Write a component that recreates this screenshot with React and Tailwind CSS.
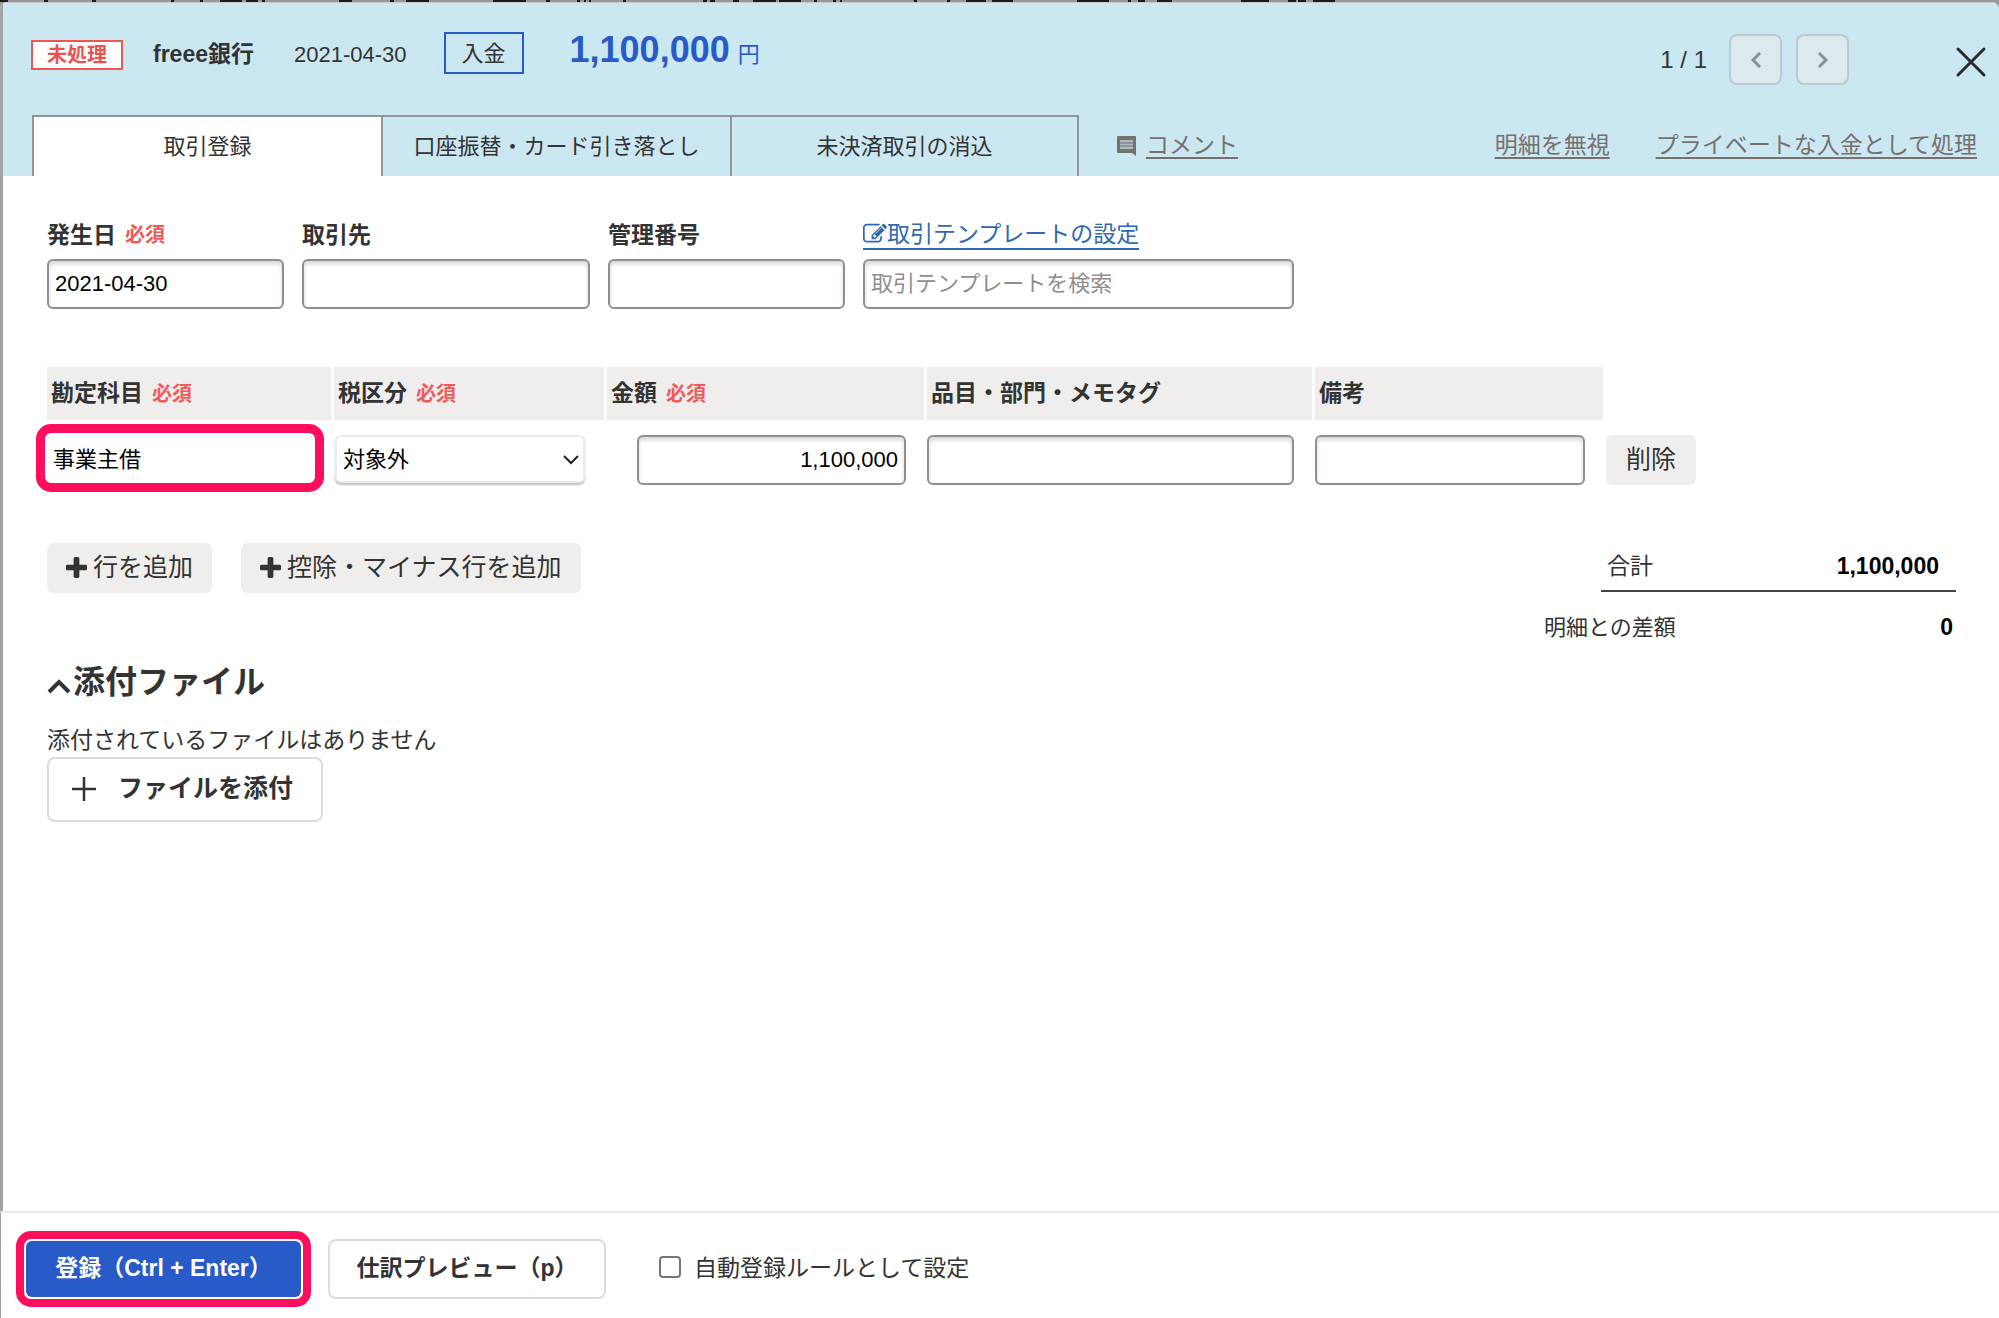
import { useState } from "react";

const FIELD =
  "h-[50px] rounded-md border-2 border-[#8f8f8f] bg-white px-[6px] text-[22px] text-black shadow-[inset_0_3px_4px_rgba(0,0,0,0.16)] outline-none placeholder:text-[#8e8e8e]";
const SOFT_BUTTON =
  "flex h-[50px] items-center rounded-md bg-[#efeeed] pb-[2px] text-[25px] leading-[36px]";
const HEAD = "flex h-[53px] items-center gap-[9px] bg-[#efeeed] pl-1 text-[23px] font-bold";

/* Bottom edge of the menu bar behind the dialog: [x, width] of each glyph foot. */
const MENU_FEET = [
  [0, 8], [44, 4], [92, 4], [171, 3], [200, 3], [220, 22], [246, 12], [262, 3], [339, 13],
  [390, 4], [406, 23], [493, 33], [546, 4], [577, 3], [584, 2], [589, 2], [623, 3], [703, 4],
  [710, 5], [733, 6], [753, 23], [779, 22], [814, 3], [833, 3], [840, 2], [914, 3], [947, 3],
  [966, 20], [992, 21], [1077, 32], [1128, 3], [1138, 7], [1157, 15], [1241, 28], [1288, 8],
  [1298, 8], [1313, 22],
];

function PlusIcon() {
  return (
    <svg className="size-[21px] shrink-0" viewBox="192 128 1408 1408" fill="#333">
      <path d="M1600 736v192q0 40-28 68t-68 28h-416v416q0 40-28 68t-68 28h-192q-40 0-68-28t-28-68v-416h-416q-40 0-68-28t-28-68v-192q0-40 28-68t68-28h416v-416q0-40 28-68t68-28h192q40 0 68 28t28 68v416h416q40 0 68 28t28 68z" />
    </svg>
  );
}

function EditIcon() {
  return (
    <svg className="size-[24px] shrink-0" viewBox="0 0 1792 1792" fill="currentColor">
      <path d="M888 1184l116-116-152-152-116 116v56h96v96h56zm440-720q-16-16-33 1l-350 350q-17 17-1 33t33-1l350-350q17-17 1-33zm80 594v190q0 119-84.5 203.500t-203.500 84.500h-832q-119 0-203.500-84.500t-84.500-203.500v-832q0-119 84.500-203.500t203.500-84.500h832q63 0 117 25 15 7 18 23 3 17-9 29l-49 49q-14 14-32 8-23-6-45-6h-832q-66 0-113 47t-47 113v832q0 66 47 113t113 47h832q66 0 113-47t47-113v-126q0-13 9-22l64-64q15-15 35-7t20 29zm-96-738l288 288-672 672h-288v-288zm444 132l-92 92-288-288 92-92q28-28 68-28t68 28l152 152q28 28 28 68t-28 68z" />
    </svg>
  );
}

function Required() {
  return <span className="text-[20px] font-bold text-[#f05a5a]">必須</span>;
}

function Field({ label, id, required, width, value }) {
  return (
    <div className={`flex flex-col gap-[7px] ${width}`}>
      <label htmlFor={id} className="flex items-center gap-[9px] text-[23px] leading-[34px] font-bold">
        {label}
        {required && <Required />}
      </label>
      <input id={id} defaultValue={value} className={`${FIELD} w-full`} />
    </div>
  );
}

function NavButton({ label, d }) {
  return (
    <button
      aria-label={label}
      className="flex h-[51px] w-[53px] items-center justify-center rounded-lg border-2 border-[#bccbd1] bg-[#dce9ef]"
    >
      <svg width="12" height="16" viewBox="0 0 12 16" fill="none" stroke="#84919a" strokeWidth="3">
        <path d={d} />
      </svg>
    </button>
  );
}

function Tab({ label, active }) {
  return (
    <button
      role="tab"
      aria-selected={active}
      className={`h-[61px] w-[349px] border-t-2 border-l-2 border-[#8f9598] text-[22px] last:border-r-2 ${active ? "bg-white" : ""}`}
    >
      {label}
    </button>
  );
}

export default function App() {
  const [tax, setTax] = useState("対象外");
  return (
    <div className="flex min-h-screen flex-col bg-[#999999] font-['Liberation_Sans','Noto_Sans_CJK_JP',sans-serif] text-[#333333]">
      <div className="h-[2px] overflow-hidden" aria-hidden="true">
        <svg width="1400" height="2" fill="#1c1c1c">
          {MENU_FEET.map(([x, w]) => (
            <rect key={x} x={x} y="0" width={w} height="2" />
          ))}
        </svg>
      </div>
      <main className="flex flex-1 flex-col overflow-hidden rounded-t-lg bg-white">
        <header className="flex h-[174px] flex-col justify-between border-t border-l-3 border-t-[#c9c9c9] border-l-[#a3a3a3] bg-[#cbe7f1] pl-[29px]">
          <div className="flex items-start pt-[29px] pr-[12px]">
            <span className="-ml-[1px] mt-2 flex h-[30px] items-center border-2 border-[#ee5555] bg-white px-[14px] text-[20px] font-bold text-[#ee4f4f]">
              未処理
            </span>
            <strong className="ml-[30px] text-[23px] leading-[44px]">freee銀行</strong>
            <span className="ml-10 text-[22px] leading-[46px]">2021-04-30</span>
            <span className="ml-[37px] flex h-[42px] items-center border-2 border-[#285ac8] px-4 text-[22px]">入金</span>
            <span className="ml-[46px] flex items-baseline gap-2 leading-[36px] text-[#285ac8]">
              <strong className="text-[36px]">1,100,000</strong>
              <span className="text-[22px]">円</span>
            </span>
            <div className="ml-auto flex items-center gap-[14px] pt-[2px]">
              <span className="mr-2 text-[24px]">1 / 1</span>
              <NavButton label="前へ" d="M10 1 3 8l7 7" />
              <NavButton label="次へ" d="M2 1l7 7-7 7" />
            </div>
            <button aria-label="閉じる" className="mt-[14px] ml-[106px]">
              <svg width="32" height="32" viewBox="0 0 32 32" fill="none" stroke="#2b2b2b" strokeWidth="3" strokeLinecap="round">
                <path d="M3 3l26 26M29 3 3 29" />
              </svg>
            </button>
          </div>
          <div className="flex items-end pr-[22px]">
            <div role="tablist" className="flex">
              <Tab label="取引登録" active />
              <Tab label="口座振替・カード引き落とし" />
              <Tab label="未決済取引の消込" />
            </div>
            <nav className="flex h-[60px] flex-1 items-center pb-[2px] pl-[37px] text-[23px] text-[#757171]">
              <svg width="22" height="20" viewBox="0 0 22 20" className="mt-[2px] shrink-0">
                <path fill="#757171" d="M2 0h17a1 1 0 0 1 1 1v19l-4-3H2a1 1 0 0 1-1-1V1a1 1 0 0 1 1-1Z" />
                <path fill="#a9bbc1" d="M4 4h13v9H4z" />
                <path stroke="#757171" strokeWidth="1.2" d="M4 7h13M4 10h13" />
              </svg>
              <a href="#comment" className="ml-2 underline decoration-2 underline-offset-4">コメント</a>
              <a href="#ignore" className="ml-auto underline decoration-2 underline-offset-4">明細を無視</a>
              <a href="#private" className="ml-[46px] underline decoration-2 underline-offset-4">プライベートな入金として処理</a>
            </nav>
          </div>
        </header>

        <section className="flex-1 border-l-3 border-[#a3a3a3] pt-[42px] pr-[43px] pl-[44px]">
          <div className="flex gap-[18px]">
            <Field id="date" label="発生日" required value="2021-04-30" width="w-[237px]" />
            <Field id="partner" label="取引先" width="w-[288px]" />
            <Field id="number" label="管理番号" width="w-[237px]" />
            <div className="flex w-[431px] flex-col gap-[7px]">
              <a href="#template" className="flex h-[34px] items-center self-start text-[23px] text-[#2f69b5]">
                <span className="flex items-center border-b-2 border-[#2f69b5] leading-[28px]">
                  <EditIcon />
                  取引テンプレートの設定
                </span>
              </a>
              <input aria-label="取引テンプレートを検索" placeholder="取引テンプレートを検索" className={`${FIELD} w-full`} />
            </div>
          </div>

          <div className="mt-[58px] grid grid-cols-[284px_270px_317px_385px_288px_auto] gap-x-[3px]">
            <div className={HEAD}>勘定科目<Required /></div>
            <div className={HEAD}>税区分<Required /></div>
            <div className={HEAD}>金額<Required /></div>
            <div className={HEAD}>品目・部門・メモタグ</div>
            <div className={HEAD}>備考</div>
            <div />
            <div className="-ml-[11px] pt-1">
              <input
                aria-label="勘定科目"
                defaultValue="事業主借"
                className="h-[68px] w-[288px] rounded-[15px] border-9 border-[#ff0f5b] bg-white px-2 pb-[2px] text-[22px] text-black outline-none"
              />
            </div>
            <div className="relative pt-[15px] pl-[1px]">
              <select
                aria-label="税区分"
                value={tax}
                onChange={(e) => setTax(e.target.value)}
                className="h-[48px] w-[250px] appearance-none rounded-md border-2 border-[#ebebeb] bg-white px-[6px] text-[22px] text-black shadow-[0_2px_2px_rgba(0,0,0,0.25)] outline-none"
              >
                <option>対象外</option>
              </select>
              <svg className="pointer-events-none absolute top-[34px] left-[228px]" width="18" height="12" viewBox="0 0 18 12" fill="none" stroke="#222" strokeWidth="2">
                <path d="m2 2 7 7 7-7" />
              </svg>
            </div>
            <div className="pt-[15px] pl-[30px]">
              <input aria-label="金額" defaultValue="1,100,000" className={`${FIELD} w-[269px] text-right`} />
            </div>
            <div className="pt-[15px]">
              <input aria-label="品目・部門・メモタグ" className={`${FIELD} w-[367px]`} />
            </div>
            <div className="pt-[15px]">
              <input aria-label="備考" className={`${FIELD} w-[270px]`} />
            </div>
            <div className="pt-[15px]">
              <button className={`${SOFT_BUTTON} px-5`}>削除</button>
            </div>
          </div>

          <div className="mt-[51px] flex items-start justify-between">
            <div className="flex gap-[29px]">
              <button className={`${SOFT_BUTTON} gap-[6px] px-[19px]`}>
                <PlusIcon />
                行を追加
              </button>
              <button className={`${SOFT_BUTTON} gap-[6px] px-[19px]`}>
                <PlusIcon />
                控除・マイナス行を追加
              </button>
            </div>
            <dl className="flex w-[412px] flex-col text-[23px]">
              <div className="ml-auto flex h-[49px] w-[355px] items-center justify-between border-b-2 border-[#444] pr-[17px] pl-[6px]">
                <dt>合計</dt>
                <dd className="font-bold text-black">1,100,000</dd>
              </div>
              <div className="mt-[18px] flex h-[34px] items-center justify-between pr-[3px]">
                <dt className="text-[22px]">明細との差額</dt>
                <dd className="font-bold text-black">0</dd>
              </div>
            </dl>
          </div>

          <h2 className="mt-[14px] text-[32px] leading-[48px] font-bold">
            <button className="flex items-center" aria-expanded="true">
              <svg className="mt-2 mr-[2px]" width="24" height="18" viewBox="0 0 24 18" fill="none" stroke="#333" strokeWidth="4">
                <path d="m2 15 10-10 10 10" />
              </svg>
              添付ファイル
            </button>
          </h2>
          <p className="mt-[17px] text-[23px] leading-[34px]">添付されているファイルはありません</p>
          <button className="flex h-[65px] items-center gap-[22px] rounded-lg border-2 border-[#dddcdc] pr-[28px] pb-[2px] pl-[23px] text-[25px] font-bold">
            <svg width="24" height="24" viewBox="0 0 24 24" stroke="#333" strokeWidth="2.5">
              <path d="M12 0v24M0 12h24" />
            </svg>
            ファイルを添付
          </button>
        </section>

        <footer className="flex h-[107px] items-center border-t-2 border-l border-t-[#e9e9e9] border-l-[#a3a3a3] pt-[6px] pl-[15px] text-[23px]">
          <button className="h-[76px] rounded-[15px] border-8 border-[#ff0f5b] bg-white p-[2px] font-bold text-white">
            <span className="flex h-full w-[275px] items-center justify-center rounded-md bg-[#285ac8]">登録（Ctrl + Enter）</span>
          </button>
          <button className="ml-[17px] h-[60px] w-[278px] rounded-lg border-2 border-[#dddcdc] font-bold">仕訳プレビュー（p）</button>
          <label className="ml-[53px] flex items-center gap-[13px]">
            <input type="checkbox" className="mb-1 size-[22px] appearance-none rounded-[4px] border-2 border-[#767676] bg-white" />
            自動登録ルールとして設定
          </label>
        </footer>
      </main>
    </div>
  );
}
